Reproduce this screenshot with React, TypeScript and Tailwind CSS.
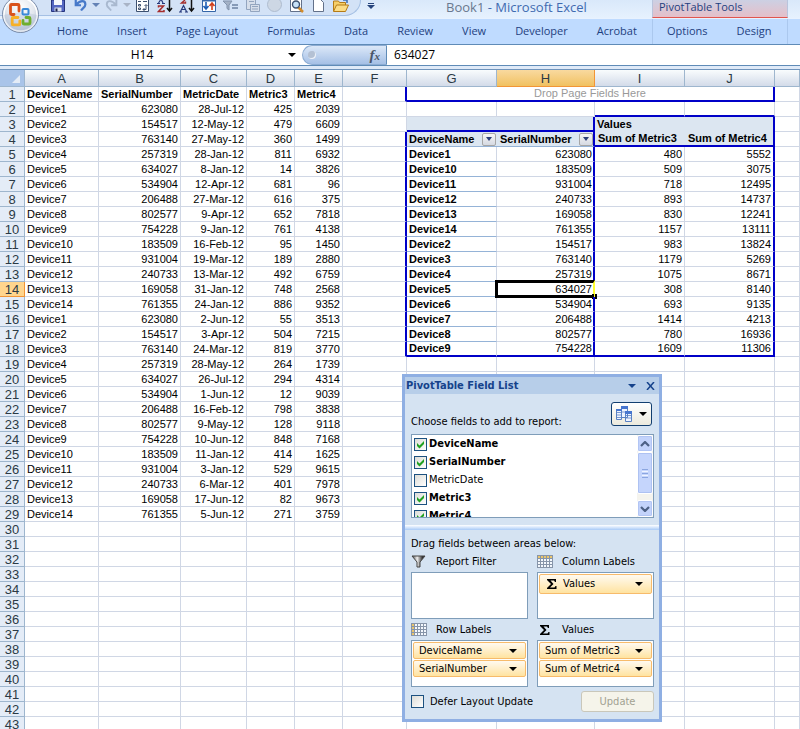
import type { ReactNode } from "react";
import clsx from "clsx";

const columns = ["A", "B", "C", "D", "E", "F", "G", "H", "I", "J", ""];

const records = [
  ["Device1", "623080", "28-Jul-12", "425", "2039"],
  ["Device2", "154517", "12-May-12", "479", "6609"],
  ["Device3", "763140", "27-May-12", "360", "1499"],
  ["Device4", "257319", "28-Jan-12", "811", "6932"],
  ["Device5", "634027", "8-Jan-12", "14", "3826"],
  ["Device6", "534904", "12-Apr-12", "681", "96"],
  ["Device7", "206488", "27-Mar-12", "616", "375"],
  ["Device8", "802577", "9-Apr-12", "652", "7818"],
  ["Device9", "754228", "9-Jan-12", "761", "4138"],
  ["Device10", "183509", "16-Feb-12", "95", "1450"],
  ["Device11", "931004", "19-Mar-12", "189", "2880"],
  ["Device12", "240733", "13-Mar-12", "492", "6759"],
  ["Device13", "169058", "31-Jan-12", "748", "2568"],
  ["Device14", "761355", "24-Jan-12", "886", "9352"],
  ["Device1", "623080", "2-Jun-12", "55", "3513"],
  ["Device2", "154517", "3-Apr-12", "504", "7215"],
  ["Device3", "763140", "24-Mar-12", "819", "3770"],
  ["Device4", "257319", "28-May-12", "264", "1739"],
  ["Device5", "634027", "26-Jul-12", "294", "4314"],
  ["Device6", "534904", "1-Jun-12", "12", "9039"],
  ["Device7", "206488", "16-Feb-12", "798", "3838"],
  ["Device8", "802577", "9-May-12", "128", "9118"],
  ["Device9", "754228", "10-Jun-12", "848", "7168"],
  ["Device10", "183509", "11-Jan-12", "414", "1625"],
  ["Device11", "931004", "3-Jan-12", "529", "9615"],
  ["Device12", "240733", "6-Mar-12", "401", "7978"],
  ["Device13", "169058", "17-Jun-12", "82", "9673"],
  ["Device14", "761355", "5-Jun-12", "271", "3759"],
];

const headings = ["DeviceName", "SerialNumber", "MetricDate", "Metric3", "Metric4"];

const pivot = [
  ["Device1", "623080", "480", "5552"],
  ["Device10", "183509", "509", "3075"],
  ["Device11", "931004", "718", "12495"],
  ["Device12", "240733", "893", "14737"],
  ["Device13", "169058", "830", "12241"],
  ["Device14", "761355", "1157", "13111"],
  ["Device2", "154517", "983", "13824"],
  ["Device3", "763140", "1179", "5269"],
  ["Device4", "257319", "1075", "8671"],
  ["Device5", "634027", "308", "8140"],
  ["Device6", "534904", "693", "9135"],
  ["Device7", "206488", "1414", "4213"],
  ["Device8", "802577", "780", "16936"],
  ["Device9", "754228", "1609", "11306"],
];

const tabs = ["Home", "Insert", "Page Layout", "Formulas", "Data", "Review", "View", "Developer", "Acrobat"];

const fields = [
  { name: "DeviceName", used: true },
  { name: "SerialNumber", used: true },
  { name: "MetricDate", used: false },
  { name: "Metric3", used: true },
  { name: "Metric4", used: true },
];

function Caret({ className = "fill-black" }: { className?: string }) {
  return (
    <svg viewBox="0 0 8 4" className={clsx("w-2 h-1 shrink-0", className)}>
      <path d="M0 0h8L4 4z" />
    </svg>
  );
}

function OfficeOrb() {
  return (
    <svg viewBox="0 0 40 36" className="w-10 h-9">
      <defs>
        <radialGradient id="orb" cx="50%" cy="30%" r="70%">
          <stop offset="0" stopColor="#ffffff" />
          <stop offset="0.55" stopColor="#e3e7ee" />
          <stop offset="1" stopColor="#a9b6cb" />
        </radialGradient>
      </defs>
      <circle cx="20.500" cy="14.500" r="18" fill="url(#orb)" stroke="#7b8daa" />
      <circle cx="20.500" cy="14.500" r="16.500" fill="none" stroke="#fff" strokeWidth="1.500" />
      <path d="M4 15q16-5 33 0a16.500 16.500 0 0 1-33 0z" fill="#b9c6d9" opacity=".45" />
      <g fill="none" strokeWidth="2.800" strokeLinejoin="round" strokeLinecap="round">
        <path d="M19 11V5.500q0-1-1-1h-6.500q-1 0-1 1v8q0 1 1 1H14" stroke="#d9531c" />
        <path d="M18 17.500h-5q-.8 0-.8.8v5.700q0 .8.800.8h6q.8 0 .8-.8V21" stroke="#f7b026" />
        <path d="M26 17.500h3q1 0 1 1V23q0 1-1 1h-5q-1 0-1-1v-2.500" stroke="#6fae2e" />
      </g>
      <rect x="22.500" y="9" width="6" height="5.500" rx="1" fill="none" stroke="#3b8ad8" strokeWidth="2" />
    </svg>
  );
}

const toolIcons: { label: string; art: ReactNode }[] = [
  {
    label: "PivotTable",
    art: (
      <g fill="none" stroke="#3d5170">
        <path d="M1.500 0v11.500h12V0" fill="#fff" />
        <path d="M3 1.500h3M8 1.500h4M3.500 4.500h2v1.500h-2zM3.500 8h2v1.500h-2z" />
        <path d="M8 9.500h3V5M9.500 6L11 4.500 12.500 6M9.500 8L8 9.500 9.500 11" />
      </g>
    ),
  },
  {
    label: "Sort A to Z",
    art: (
      <g fill="none">
        <path d="M1.500 3L3.500 0h1L6 3M0 3.500h3M5 3.500h3" stroke="#26397c" strokeWidth="1.200" />
        <path d="M1.500 7.500V6h5l-5 5.500h5.500V10" stroke="#a52c2c" strokeWidth="1.500" />
        <path d="M12.500 0v11M10 8l2.500 3L15 8" stroke="#111" strokeWidth="1.500" />
      </g>
    ),
  },
  {
    label: "Sort Z to A",
    art: (
      <g fill="none">
        <path d="M6 0L2.500 3h4V1.500" stroke="#a52c2c" strokeWidth="1.400" />
        <path d="M1.500 11.500L4.500 5.500l3 6M2.500 9.500h4M0 12h3M6 12h3" stroke="#26397c" strokeWidth="1.200" />
        <path d="M12.500 0v11M10 8l2.500 3L15 8" stroke="#111" strokeWidth="1.500" />
      </g>
    ),
  },
  {
    label: "Refresh",
    art: (
      <g fill="none">
        <path d="M1.500 0v11.500h13V0" fill="#fff" stroke="#3566a8" />
        <path d="M1 .5h14" stroke="#3566a8" strokeWidth="2" />
        <path d="M5 2v6M2.500 6L5 9l2.500-3" stroke="#1c5db5" strokeWidth="1.600" />
        <path d="M11 10V4M8.500 6L11 3l2.500 3" stroke="#cf3f1d" strokeWidth="1.600" />
      </g>
    ),
  },
  {
    label: "Filter",
    art: (
      <g>
        <path d="M0 1h9L6 5v5l-2-1.500V5z" fill="#a4b2c6" stroke="#8193ad" />
        <path d="M9 5h6M9 8h6" stroke="#6d82a3" strokeWidth="1.500" />
      </g>
    ),
  },
  {
    label: "Paste",
    art: (
      <g fill="#d6deea" stroke="#93a5bf">
        <path d="M1.500 0v9.500h9V0" />
        <path d="M4 1.500h5M5.500 4.500h9v7h-9z" />
        <path d="M7 6.500h6M7 9h6" />
      </g>
    ),
  },
  {
    label: "Record Macro",
    art: <circle cx="7.500" cy="4.500" r="7" fill="#cdd7e4" stroke="#aebccf" />,
  },
  {
    label: "Print Preview",
    art: (
      <g fill="none">
        <path d="M1.500 0v11.500h11V0" fill="#fff" stroke="#63718a" />
        <path d="M9 7l5 5" stroke="#d08a2c" strokeWidth="2.500" />
        <circle cx="7" cy="4.500" r="3.500" fill="#c7e1f7" stroke="#3d5170" strokeWidth="1.400" />
      </g>
    ),
  },
  {
    label: "New",
    art: <path d="M2.500 -1v12.500h10V2.500L9 -1" fill="#fff" stroke="#63718a" />,
  },
  {
    label: "Open",
    art: (
      <g stroke="#b47b17">
        <path d="M.5 11V1h5l1 1.500h6V6" fill="#f6cf69" />
        <path d="M.5 11.500l3-6.500h12l-3 6.500z" fill="#fbdc85" />
        <path d="M10 0h4v3" fill="none" stroke="#3d6fb5" strokeWidth="1.500" />
      </g>
    ),
  },
];

function QuickAccess() {
  return (
    <div className="flex h-4 shrink-0 items-start rounded-br-2xl border-r border-b border-[#a5c0e4] bg-[#d3e2f6] pl-[47px] pr-2">
      <button aria-label="Save" className="flex w-[23px] pl-1">
        <svg viewBox="0 0 16 14" className="w-4 h-[14px]">
          <path d="M.5 0v11.500h13V0z" fill="#5467c2" stroke="#27357e" />
          <path d="M3 0h8v5H3z" fill="#f4f7fd" />
          <path d="M3.500 7.500h7v4h-7z" fill="#dce2ee" />
          <path d="M4.500 8.500h2v3h-2z" fill="#1d2552" />
        </svg>
      </button>
      <button aria-label="Undo" className="flex w-[31px] gap-1 pl-1">
        <svg viewBox="0 0 16 14" className="w-[14px] h-[14px]">
          <path d="M2 -1v6h6M3 4C7-1 13-1 13 4c0 3-3 4-5 7" fill="none" stroke="#4779c9" strokeWidth="2.500" />
        </svg>
        <span className="pt-[3px]"><Caret className="fill-[#6482b5]" /></span>
      </button>
      <button aria-label="Redo" className="flex w-[31px] gap-1 pl-1">
        <svg viewBox="0 0 16 14" className="w-[14px] h-[14px]">
          <path d="M13 -1v6H7M12 4C8-1 2-1 2 4c0 3 3 4 5 7" fill="none" stroke="#a9b9cf" strokeWidth="2.200" />
        </svg>
        <span className="pt-[3px]"><Caret className="fill-[#a9b4c6]" /></span>
      </button>
      {toolIcons.map((icon) => (
        <button key={icon.label} aria-label={icon.label} className="flex w-[22px] justify-center">
          <svg viewBox="0 0 16 14" className="w-4 h-[14px]">{icon.art}</svg>
        </button>
      ))}
    </div>
  );
}

function Ribbon() {
  return (
    <header className="relative font-['Open_Sans',sans-serif] text-[11px] text-[#1e3f80]">
      <div className="flex h-[18px] bg-linear-to-b from-[#d9e8fa] to-[#e6f1fe]">
        <QuickAccess />
        <button aria-label="Customize" className="flex w-5 shrink-0 flex-col items-center gap-px pt-[3px]">
          <span className="h-px w-[6px] bg-[#27457d]" />
          <Caret className="fill-[#27457d]" />
        </button>
        <h1 className="flex-1 whitespace-nowrap text-center text-[13px] leading-[14px] text-[#3f6ab0]">
          <span className="text-[#69788e]">Book1</span> - Microsoft Excel
        </h1>
        <div className="mr-3 w-[136px] border-x border-b border-[#b9c4dc] border-b-[#e0564f] bg-linear-to-b from-[#ccd0e3] to-[#e5bfc9] pl-[6px] leading-[14px]">
          PivotTable Tools
        </div>
      </div>
      <nav className="flex h-[26px] items-center border-t border-[#e8f2ff] bg-[#bfdbff]">
        <ul className="flex flex-1 gap-[29px] whitespace-nowrap pl-[57px]">
          {tabs.map((tab) => (
            <li key={tab}><a href="#">{tab}</a></li>
          ))}
        </ul>
        <ul className="mr-3 flex h-full w-[136px] items-center gap-[29px] border-x border-[#abc8ee] pl-[14px]">
          <li><a href="#">Options</a></li>
          <li><a href="#">Design</a></li>
        </ul>
      </nav>
      <button aria-label="Office" className="absolute left-0 top-0"><OfficeOrb /></button>
    </header>
  );
}

function FormulaBar() {
  return (
    <div className="flex h-[22px] items-stretch border-y border-[#5f8bb7] bg-white font-['Open_Sans',sans-serif] text-[12px] text-black">
      <input aria-label="Name Box" defaultValue="H14" className="w-[284px] text-center outline-none" />
      <button aria-label="Names" className="flex w-[18px] items-center pl-1"><Caret /></button>
      <div className="flex w-[85px] items-center justify-between rounded-l-full border border-r-[#5f8bb7] border-[#8cacd3] bg-linear-to-b from-[#dce8f8] to-[#a5c0e6] pl-[5px] pr-[6px]">
        <span className="size-2 rounded-full bg-[#b4c1d4] shadow-[inset_-1px_-1px_0_#eef3fa]" />
        <button aria-label="Insert Function" className="font-['Liberation_Serif',serif] text-[15px] leading-4 font-bold italic text-[#4a5566]">
          f<span className="text-[11px]">x</span>
        </button>
      </div>
      <input aria-label="Formula" defaultValue="634027" className="min-w-0 flex-1 pl-[7px] outline-none" />
    </div>
  );
}

const grid = "border-r border-b border-[#d0d7e5]";

function FilterButton({ label }: { label: string }) {
  return (
    <button aria-label={label} className="flex h-[13px] w-[14px] items-center justify-center rounded-xs border border-[#a6a6a6] bg-linear-to-b from-[#f6f6f6] to-[#d5d9e2]">
      <svg viewBox="0 0 6 4" className="h-1 w-[6px]"><path d="M0 0h6L3 4z" fill="#2c3f78" /></svg>
    </button>
  );
}

function PivotCells({ row }: { row: number }) {
  if (row === 1) {
    return (
      <td colSpan={4} className="border-r-2 border-b-2 border-[#0000c8] text-center text-[#999]">
        Drop Page Fields Here
      </td>
    );
  }
  if (row === 2) {
    return (
      <>
        <td className={grid} />
        <td className={grid} />
        <td className="border-r border-b-2 border-r-[#d0d7e5] border-b-[#0000c8]" />
        <td className="border-r border-b-2 border-r-[#d0d7e5] border-b-[#0000c8]" />
      </>
    );
  }
  if (row === 3) {
    return (
      <>
        <td className="border-b-2 border-[#0000c8] bg-[#dce6f1]" />
        <td className="border-r-2 border-b-2 border-[#0000c8] bg-[#dce6f1]" />
        <td colSpan={2} className="border-r-2 border-[#0000c8] bg-[#dce6f1] pl-[2px] font-bold">Values</td>
      </>
    );
  }
  if (row === 4) {
    return (
      <>
        <th className="border-b border-[#95b3d7] bg-[#dce6f1] pr-px pl-[2px] text-left">
          <div className="flex justify-between">DeviceName<FilterButton label="Filter DeviceName" /></div>
        </th>
        <th className="border-r-2 border-b border-r-[#0000c8] border-b-[#95b3d7] bg-[#dce6f1] pl-[3px] text-left">
          <div className="flex justify-between">SerialNumber<FilterButton label="Filter SerialNumber" /></div>
        </th>
        <th className="border-b-2 border-[#0000c8] bg-[#dce6f1] pl-[3px] text-left">Sum of Metric3</th>
        <th className="border-r-2 border-b-2 border-[#0000c8] bg-[#dce6f1] pl-[3px] text-left">Sum of Metric4</th>
      </>
    );
  }
  const data = pivot[row - 5];
  if (!data) {
    return <>{[0, 1, 2, 3].map((i) => <td key={i} className={grid} />)}</>;
  }
  const last = row === 18;
  const selected = row === 14;
  const bottom = last ? "border-b-2 border-b-[#0000c8]" : "border-b border-b-[#d0d7e5]";
  return (
    <>
      <th className={clsx("border-r border-r-[#d0d7e5] pl-[2px] text-left", last ? bottom : "border-b border-b-[#95b3d7]")}>
        {data[0]}
      </th>
      <td className={clsx("relative border-r-2 border-r-[#0000c8] pr-px text-right", bottom)}>
        {data[1]}
        {selected && (
          <>
            <span className="absolute -top-[2px] -right-[2px] -bottom-[2px] -left-[2px] border-[3px] border-r-2 border-black border-r-[#ffff30]" />
            <span className="absolute -right-1 -bottom-[3px] size-[5px] border-x-2 border-black bg-[#ffff30]" />
          </>
        )}
      </td>
      <td className={clsx("border-r border-r-[#d0d7e5] pr-[2px] text-right", bottom)}>{data[2]}</td>
      <td className={clsx("border-r-2 border-r-[#0000c8] pr-[2px] text-right", bottom)}>{data[3]}</td>
    </>
  );
}

function SheetRow({ row }: { row: number }) {
  const data = row === 1 ? headings : records[row - 2] ?? ["", "", "", "", ""];
  const pivotEdge = row === 1 || (row >= 4 && row <= 18);
  return (
    <tr className="h-[15px]">
      <th
        className={clsx(
          "border-r border-b text-[13px] font-normal text-[#2b3a45]",
          row === 14 ? "border-[#f29536] bg-[#ffd58d]" : "border-[#9eb6ce] bg-[#e4ecf7]",
        )}
      >
        {row}
      </th>
      {data.map((value, i) => (
        <td
          key={i}
          className={clsx(
            grid,
            "whitespace-nowrap",
            row === 1 && "pl-[2px] font-bold",
            row > 1 && (i === 0 ? "pl-[2px]" : "pr-[2px] text-right"),
          )}
        >
          {value}
        </td>
      ))}
      <td className={clsx("border-b border-b-[#d0d7e5]", pivotEdge ? "border-r-2 border-r-[#0000c8]" : "border-r border-r-[#d0d7e5]")} />
      <PivotCells row={row} />
      <td className={grid} />
    </tr>
  );
}

function Sheet() {
  return (
    <table className="w-full table-fixed border-separate border-spacing-0 border-t border-[#6f93bb] bg-white font-['Liberation_Sans',sans-serif] text-[11px] leading-[13px] text-black">
      <colgroup>
        <col className="w-[25px]" />
        <col className="w-[74px]" />
        <col className="w-[82px]" />
        <col className="w-[66px]" />
        <col className="w-[48px]" />
        <col className="w-[48px]" />
        <col className="w-[64px]" />
        <col className="w-[90px]" />
        <col className="w-[98px]" />
        <col className="w-[90px]" />
        <col className="w-[90px]" />
        <col />
      </colgroup>
      <thead>
        <tr className="h-[17px] text-[13px]">
          <th aria-label="Select all" className="border-r border-b border-[#9eb6ce] bg-[#a9c4e9]">
            <svg viewBox="0 0 24 16" className="h-4 w-6"><path d="M20 5v8h-8z" fill="#e4ecf7" /></svg>
          </th>
          {columns.map((name) => (
            <th
              key={name}
              className={clsx(
                "border-r border-b bg-linear-to-b font-normal text-[#2b3a45]",
                name === "H" ? "border-[#f29536] from-[#f9d99f] to-[#f1c15f]" : "border-[#9eb6ce] from-[#f9fcfd] to-[#d3dbe9]",
              )}
            >
              {name}
            </th>
          ))}
        </tr>
      </thead>
      <tbody>
        {Array.from({ length: 43 }, (_, i) => (
          <SheetRow key={i} row={i + 1} />
        ))}
      </tbody>
    </table>
  );
}

function CheckBox({ id, checked }: { id: string; checked: boolean }) {
  return (
    <span className="grid size-[13px] shrink-0">
      <input
        id={id}
        type="checkbox"
        defaultChecked={checked}
        className="peer col-start-1 row-start-1 size-[13px] appearance-none border border-[#1c5180] bg-linear-to-br from-[#dcdcd7] to-white"
      />
      <svg viewBox="0 0 13 13" className="pointer-events-none invisible col-start-1 row-start-1 size-[13px] peer-checked:visible">
        <path d="M3 5l2.500 2.500L10 3v3L5.500 10.500 3 8z" fill="#21a121" />
      </svg>
    </span>
  );
}

function Sigma() {
  return (
    <svg viewBox="0 0 10 10" className="size-[10px]">
      <path d="M0 0h9v3H8L7 1.500H3.500L6.500 5l-3.500 3.500H7.500L8.500 7H9.500v3H0V9l4-4-4-4z" />
    </svg>
  );
}

function TableIcon({ rows = false }: { rows?: boolean }) {
  return (
    <svg viewBox="0 0 16 13" className="h-[13px] w-4">
      <path d="M0 0h16v13H0z" fill="#8795a9" />
      {[1, 4, 7, 10].map((y) =>
        [1, 4, 7, 10, 13].map((x) => (
          <path key={`${x}-${y}`} d={`M${x} ${y}h2v2h-2z`} fill={(rows ? x : y) === 1 ? "#e9c46c" : "#f4f8fd"} />
        )),
      )}
    </svg>
  );
}

function FunnelIcon() {
  return (
    <svg viewBox="0 0 16 13" className="h-[13px] w-4">
      <defs>
        <linearGradient id="funnel">
          <stop offset="0" stopColor="#444" />
          <stop offset="0.4" stopColor="#f0f0f0" />
          <stop offset="0.8" stopColor="#333" />
        </linearGradient>
      </defs>
      <path d="M1 1h13L9 7v5H6V7z" fill="url(#funnel)" stroke="#444" />
    </svg>
  );
}

function Area({ title, icon, chips, tall = false }: { title: string; icon: ReactNode; chips: string[]; tall?: boolean }) {
  return (
    <section className="flex flex-col">
      <h3 className="flex h-[21px] items-center">
        <span className="w-[25px]">{icon}</span>
        {title}
      </h3>
      <div className="flex h-[47px] flex-col gap-px border border-[#7f9db9] bg-white p-px">
        {chips.map((chip) => (
          <button
            key={chip}
            className={clsx(
              "flex shrink-0 items-center justify-between rounded-xs border border-[#f7bb6b] bg-linear-to-b from-[#fffaf0] to-[#ffe3a0] pr-2 pl-[5px]",
              tall ? "h-5" : "h-[17px]",
            )}
          >
            <span className="flex items-center gap-1">
              {tall && <span className="px-[2px]"><Sigma /></span>}
              {chip}
            </span>
            <Caret />
          </button>
        ))}
      </div>
    </section>
  );
}

function ScrollButton({ label, path }: { label: string; path: string }) {
  return (
    <button aria-label={label} className="flex h-[17px] items-center justify-center rounded-xs border border-white bg-[#c3d3fb] shadow-[inset_0_0_0_1px_#b2c5f4]">
      <svg viewBox="0 0 10 6" className="h-[6px] w-[10px]"><path d={path} fill="none" stroke="#4d6185" strokeWidth="2.200" /></svg>
    </button>
  );
}

function FieldList() {
  return (
    <aside className="absolute left-[402px] top-[374px] w-[260px] border-[3px] border-[#8fafe3] bg-[#d5e3f2] font-['DejaVu_Sans_Condensed','DejaVu_Sans',sans-serif] text-[11px] leading-[14px] text-black">
      <div className="flex h-[17px] items-center justify-between bg-[#b7cee9] pl-px pr-1">
        <h2 className="font-bold text-[#15428b]">PivotTable Field List</h2>
        <div className="flex items-center gap-[10px]">
          <button aria-label="Options"><Caret className="fill-[#15428b]" /></button>
          <button aria-label="Close">
            <svg viewBox="0 0 9 8" className="h-2 w-[9px]"><path d="M1 0l7 8M8 0L1 8" stroke="#15428b" strokeWidth="1.500" /></svg>
          </button>
        </div>
      </div>
      <div className="pl-[6px] pr-[5px] pt-2">
        <div className="flex h-[27px] items-end justify-between pr-[2px]">
          <p>Choose fields to add to report:</p>
          <button aria-label="Layout" className="flex h-6 w-[41px] items-center justify-around self-start rounded-[3px] border border-[#123f70] bg-linear-to-b from-white to-[#eceade]">
            <svg viewBox="0 0 16 16" className="size-4">
              <g fill="#eef4ff" stroke="#5a82c4">
                <path d="M.5 3.500h5v10h-5zM5.500 .5h6v11h-6zM9.500 5.500h6v10h-6z" />
                <path d="M1 6.500h4M1 9h4M1 11.500h4M6 6h3M10 9.500h5M10 12h5" strokeWidth=".8" />
              </g>
              <path d="M0 3h6v2H0zM5 0h7v3H5zM9 5h7v3H9z" fill="#4776cf" />
            </svg>
            <Caret />
          </button>
        </div>
        <div className="mt-[5px] flex h-[84px] justify-between overflow-hidden border border-[#7f9db9] bg-white">
          <ul className="pl-[2px]">
            {fields.map((field) => (
              <li key={field.name} className="flex h-[18px] items-center gap-[2px]">
                <CheckBox id={field.name} checked={field.used} />
                <label htmlFor={field.name} className={field.used ? "font-bold" : undefined}>{field.name}</label>
              </li>
            ))}
          </ul>
          <div className="flex w-4 flex-col bg-[#f5f4ee]">
            <ScrollButton label="Scroll up" path="M1 5l4-4 4 4" />
            <div className="mb-auto flex h-[42px] flex-col items-center justify-center gap-px rounded-xs border border-white bg-[#c5d5fc] shadow-[inset_0_0_0_1px_#aec2f2]">
              <span className="h-px w-[6px] bg-[#8ba6e0]" />
              <span className="h-px w-[6px] bg-[#eef3ff]" />
              <span className="h-px w-[6px] bg-[#8ba6e0]" />
              <span className="h-px w-[6px] bg-[#eef3ff]" />
              <span className="h-px w-[6px] bg-[#8ba6e0]" />
            </div>
            <ScrollButton label="Scroll down" path="M1 1l4 4 4-4" />
          </div>
        </div>
      </div>
      <div className="mt-[7px] h-[5px] bg-linear-to-b from-white to-[#a9cbf7]" />
      <div className="pl-[6px] pr-[5px] pb-[7px]">
        <p className="mt-[7px]">Drag fields between areas below:</p>
        <div className="grid grid-cols-2 gap-x-[9px]">
          <Area title="Report Filter" icon={<FunnelIcon />} chips={[]} />
          <Area title="Column Labels" icon={<TableIcon />} chips={["Values"]} tall />
          <Area title="Row Labels" icon={<TableIcon rows />} chips={["DeviceName", "SerialNumber"]} />
          <Area title="Values" icon={<span className="block pl-[3px]"><Sigma /></span>} chips={["Sum of Metric3", "Sum of Metric4"]} />
        </div>
        <div className="mt-1 flex items-center gap-[6px]">
          <CheckBox id="defer" checked={false} />
          <label htmlFor="defer">Defer Layout Update</label>
          <button disabled className="ml-auto h-[21px] w-[73px] rounded-[3px] border border-[#c9c7ba] bg-[#f5f4ea] text-[#a1a192]">Update</button>
        </div>
      </div>
    </aside>
  );
}

export default function App() {
  return (
    <div className="relative h-screen overflow-hidden bg-white">
      <Ribbon />
      <FormulaBar />
      <div className="h-[3px] bg-[#dfeaf8]" />
      <Sheet />
      <FieldList />
    </div>
  );
}
